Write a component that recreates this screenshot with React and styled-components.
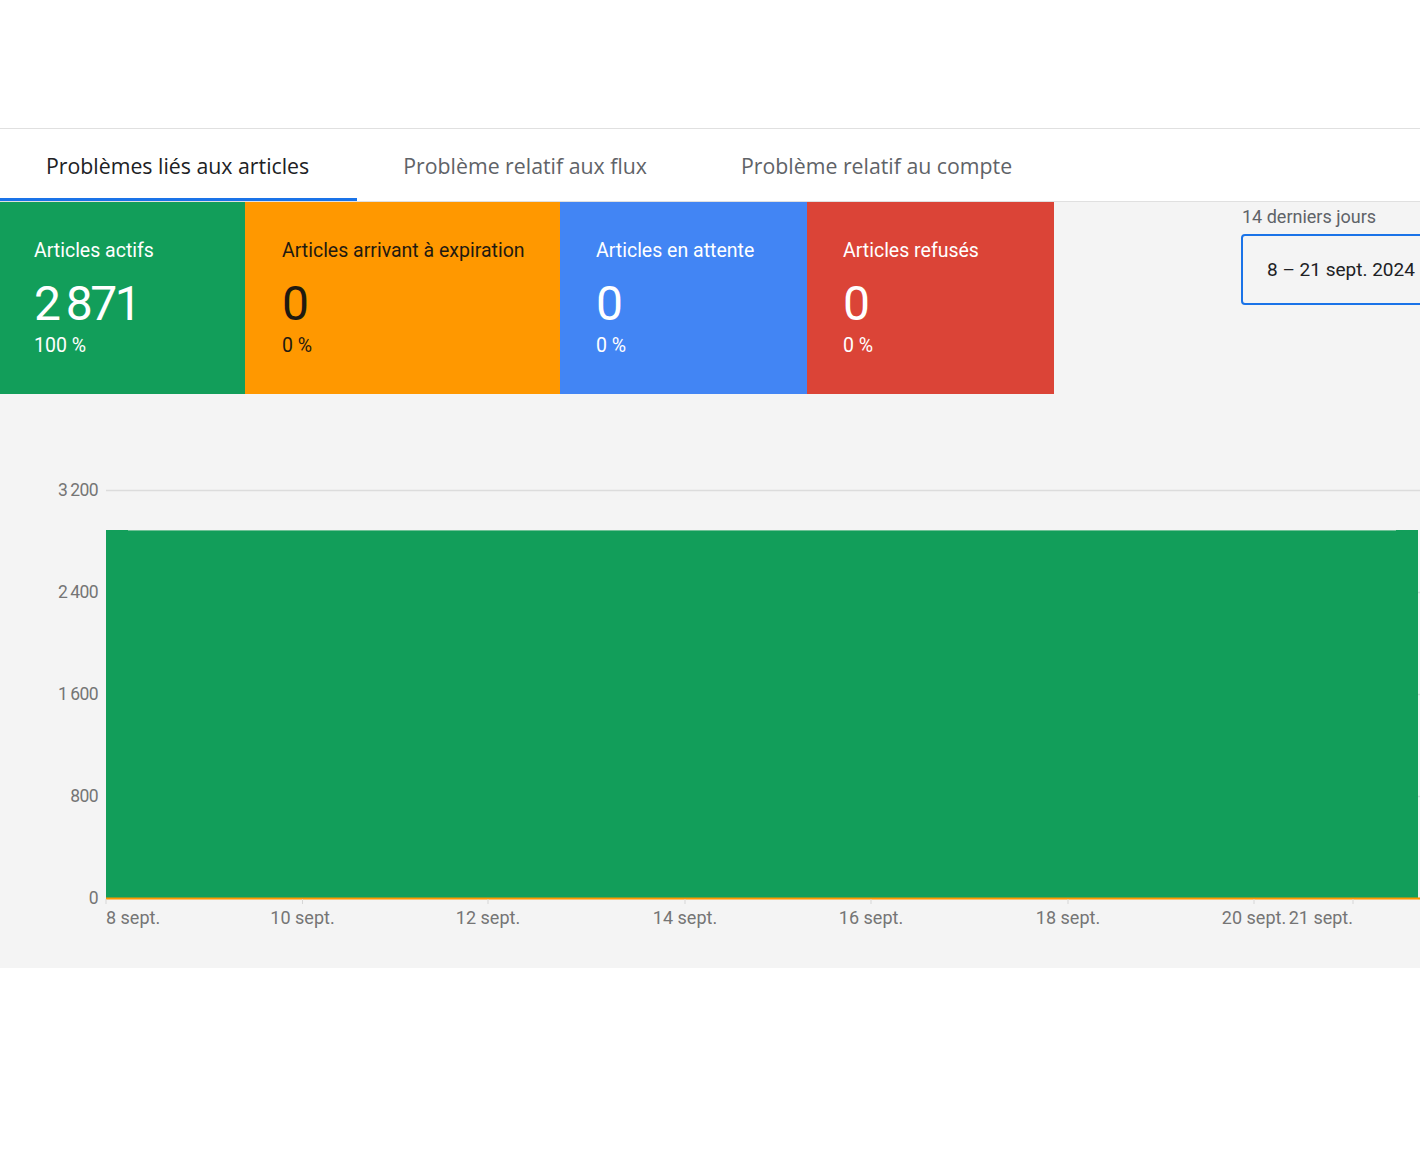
import React from "react";
import styled, { createGlobalStyle } from "styled-components";

const GlobalStyle = createGlobalStyle`
  body {
    margin: 0;
    background: #ffffff;
    font-family: Roboto, "Liberation Sans", Arial, sans-serif;
  }
`;

const Page = styled.div`
  width: 1420px;
  padding-top: 128px;
  overflow: hidden;
`;

const TabBar = styled.div`
  display: flex;
  border-top: 1px solid #e0e0e0;
  border-bottom: 1px solid #e0e0e0;
  height: 72px;
`;

const Tab = styled.div`
  padding: 0 48px 0 46px;
  display: flex;
  align-items: center;
  font-family: "Open Sans", Roboto, sans-serif;
  font-size: 21.3px;
  font-weight: 500;
  color: ${(p) => (p.$active ? "#202124" : "#5f6368")};
  box-shadow: ${(p) => (p.$active ? "inset 0 -3px 0 #1a73e8" : "none")};
  white-space: nowrap;
`;

const Panel = styled.div`
  background: #f4f4f4;
  padding-bottom: 28px;
`;

const TopRow = styled.div`
  display: flex;
  align-items: flex-start;
`;

const Card = styled.div`
  flex-shrink: 0;
  box-sizing: border-box;
  width: ${(p) => p.$width}px;
  height: 192px;
  padding: 37px 0 0 ${(p) => p.$pad}px;
  background: ${(p) => p.$bg};
  color: ${(p) => p.$fg};
`;

const CardTitle = styled.div`
  font-size: 19.5px;
  line-height: 24px;
  white-space: nowrap;
`;

const CardValue = styled.div`
  font-size: 48px;
  line-height: 52px;
  margin-top: 15px;
  font-weight: 400;
  letter-spacing: -2.5px;
`;

const CardPercent = styled.div`
  font-size: 19.5px;
  line-height: 22px;
  margin-top: 5px;
`;

const DateArea = styled.div`
  flex-shrink: 0;
  margin-left: 187px;
  padding-top: 4px;
`;

const DateLabel = styled.div`
  font-size: 18px;
  line-height: 22px;
  color: #5f6368;
  margin-left: 1px;
`;

const DateBox = styled.div`
  margin-top: 6px;
  width: 220px;
  height: 71px;
  box-sizing: border-box;
  border: 2.5px solid #1a73e8;
  border-radius: 4px;
  display: flex;
  align-items: center;
  padding-left: 24px;
  font-size: 19px;
  color: #202124;
  white-space: nowrap;
`;

const ChartWrap = styled.div`
  margin-top: 76px;
  height: 470px;
`;

const cards = [
  { title: "Articles actifs", value: "2\u2009871", pct: "100 %", bg: "#129e5a", fg: "#ffffff", width: 245, pad: 34 },
  { title: "Articles arrivant à expiration", value: "0", pct: "0 %", bg: "#ff9800", fg: "#1f1a10", width: 315, pad: 37 },
  { title: "Articles en attente", value: "0", pct: "0 %", bg: "#4285f4", fg: "#ffffff", width: 247, pad: 36 },
  { title: "Articles refusés", value: "0", pct: "0 %", bg: "#db4437", fg: "#ffffff", width: 247, pad: 36 },
];

const yTicks = [
  { label: "3\u2009200", y: 20 },
  { label: "2\u2009400", y: 122 },
  { label: "1\u2009600", y: 224 },
  { label: "800", y: 326 },
  { label: "0", y: 428 },
];

const xTicks = [
  { label: "8 sept.", x: 106, anchor: "start" },
  { label: "10 sept.", x: 302.5, anchor: "middle" },
  { label: "12 sept.", x: 488, anchor: "middle" },
  { label: "14 sept.", x: 685, anchor: "middle" },
  { label: "16 sept.", x: 871, anchor: "middle" },
  { label: "18 sept.", x: 1068, anchor: "middle" },
  { label: "20 sept.", x: 1254, anchor: "middle" },
  { label: "21 sept.", x: 1353, anchor: "end" },
];

function Chart() {
  return (
    <svg width="1420" height="470" viewBox="0 0 1420 470">
      {yTicks.map((t) => (
        <g key={t.label}>
          <line x1="106" x2="1420" y1={t.y + 0.5} y2={t.y + 0.5} stroke="#dcdcdc" strokeWidth="1.5" />
          <text
            x="98"
            y={t.y + 6}
            textAnchor="end"
            fontSize="17.5"
            letterSpacing="-0.6"
            fill="#757575"
            fontFamily="Roboto, sans-serif"
          >
            {t.label}
          </text>
        </g>
      ))}
      <rect x="106" y="60" width="1312" height="368" fill="#129e5a" />
      <line x1="128" x2="1396" y1="60.5" y2="60.5" stroke="#6fc196" strokeWidth="1" />
      <line x1="106" x2="1420" y1="428.5" y2="428.5" stroke="#ff9800" strokeWidth="2" />
      {xTicks.map((t) => (
        <g key={t.label}>
          <line x1={t.x} x2={t.x} y1="429" y2="434" stroke="#d6d6d6" strokeWidth="1" />
          <text
            x={t.x}
            y={454}
            textAnchor={t.anchor}
            fontSize="18"
            fill="#757575"
            fontFamily="Roboto, sans-serif"
          >
            {t.label}
          </text>
        </g>
      ))}
    </svg>
  );
}

export default function App() {
  return (
    <>
      <GlobalStyle />
      <Page>
        <TabBar>
          <Tab $active>Problèmes liés aux articles</Tab>
          <Tab>Problème relatif aux flux</Tab>
          <Tab>Problème relatif au compte</Tab>
        </TabBar>
        <Panel>
          <TopRow>
            {cards.map((c) => (
              <Card key={c.title} $bg={c.bg} $fg={c.fg} $width={c.width} $pad={c.pad}>
                <CardTitle>{c.title}</CardTitle>
                <CardValue>{c.value}</CardValue>
                <CardPercent>{c.pct}</CardPercent>
              </Card>
            ))}
            <DateArea>
              <DateLabel>14 derniers jours</DateLabel>
              <DateBox>8 – 21 sept. 2024</DateBox>
            </DateArea>
          </TopRow>
          <ChartWrap>
            <Chart />
          </ChartWrap>
        </Panel>
      </Page>
    </>
  );
}
